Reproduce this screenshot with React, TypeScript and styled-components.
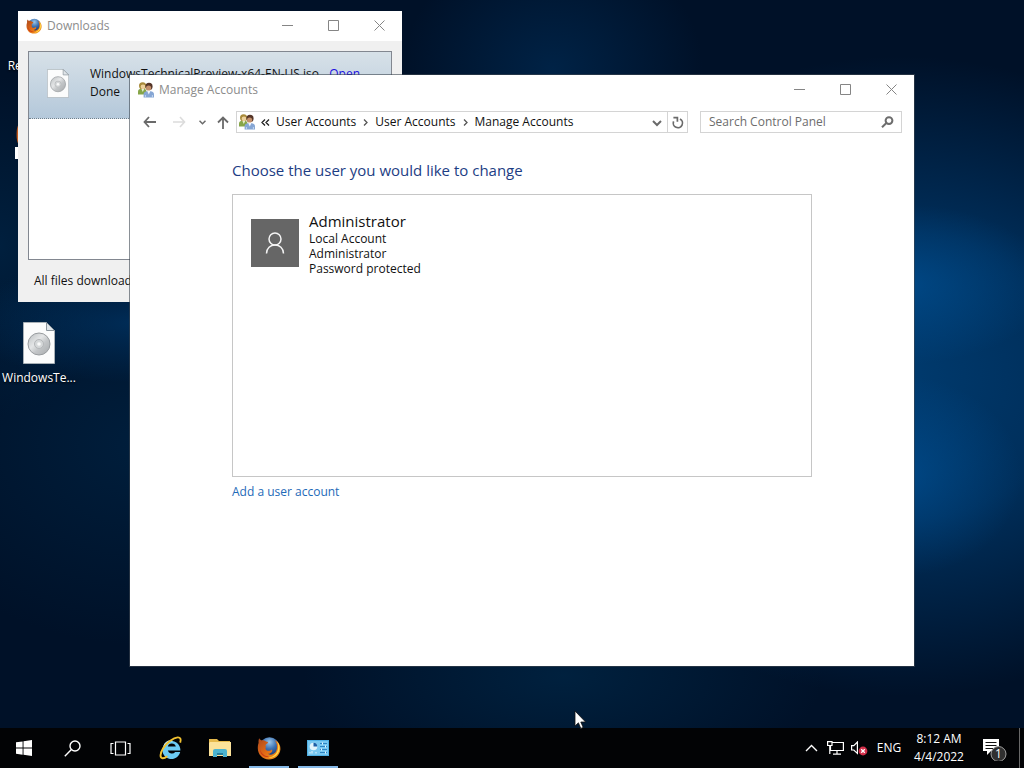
import { useState } from "react";
import styled, { createGlobalStyle } from "styled-components";

const GlobalStyle = createGlobalStyle`
	* {
		box-sizing: border-box;
	}
	body {
		margin: 0;
		font-family: "Open Sans", "Noto Sans", sans-serif;
		font-size: 12px;
		line-height: 16px;
		color: #111;
	}
	button, input {
		font: inherit;
		color: inherit;
		border: 0;
		padding: 0;
		margin: 0;
		background: none;
	}
	svg {
		flex-shrink: 0;
	}
`;

const Desktop = styled.div`
	display: flex;
	flex-direction: column;
	height: 100vh;
	overflow: hidden;
	background-color: #001128;
	background-image: radial-gradient(
			ellipse 120px 100px at 88% 62%,
			rgba(0, 96, 176, 0.45),
			transparent
		),
		radial-gradient(
			ellipse 150px 80px at 88% 37%,
			rgba(0, 92, 168, 0.5),
			transparent
		),
		radial-gradient(
			ellipse 380px 320px at 88% 49%,
			rgba(0, 76, 140, 0.7),
			rgba(0, 66, 124, 0.6) 45%,
			transparent
		),
		radial-gradient(
			ellipse 260px 120px at 55% 88%,
			rgba(0, 52, 90, 0.45),
			transparent
		),
		radial-gradient(
			ellipse 150px 130px at 54% 9%,
			rgba(0, 52, 100, 0.5),
			transparent
		),
		radial-gradient(
			ellipse 170px 60px at 13% 42%,
			rgba(0, 62, 118, 0.55),
			transparent
		),
		radial-gradient(
			ellipse 260px 200px at 14% 58%,
			rgba(0, 46, 84, 0.45),
			transparent
		),
		radial-gradient(
			ellipse 120px 170px at 0% 32%,
			rgba(0, 46, 84, 0.5),
			transparent
		);
`;

const Canvas = styled.main`
	position: relative;
	flex: 1;
`;

const IconGrid = styled.ul`
	display: grid;
	grid-auto-rows: 104px;
	width: 78px;
	margin: 0;
	padding: 7px 0 0;
	list-style: none;
`;

const DesktopItem = styled.li<{ $row: number }>`
	grid-row: ${(props) => props.$row};
	display: flex;
	flex-direction: column;
	align-items: center;
	gap: 3px;
	color: white;
	white-space: nowrap;
	text-shadow: 0 1px 2px black;
`;

const ShortcutIcon = styled.div`
	position: relative;
	display: flex;
	align-items: center;
	height: 48px;
`;

const ShortcutArrow = styled.span`
	position: absolute;
	left: 0;
	bottom: 0;
	width: 12px;
	height: 12px;
	background: white;
`;

/* Windows float freely over the desktop */
const WindowFrame = styled.section`
	position: absolute;
	display: flex;
	flex-direction: column;
	background: white;
`;

const DownloadsWindow = styled(WindowFrame)`
	top: 11px;
	left: 18px;
	width: 384px;
	background: #f0f0f0;
`;

const AccountsWindow = styled(WindowFrame)`
	top: 75px;
	right: 110px;
	bottom: 62px;
	left: 130px;
	outline: 1px solid rgba(60, 70, 80, 0.6);
`;

const TitleBar = styled.header`
	display: flex;
	align-items: center;
	height: 30px;
	padding-left: 8px;
	gap: 5px;
	background: white;
	color: #8c8c8c;
`;

const Title = styled.h1`
	flex: 1;
	margin: 0;
	font-size: 12px;
	font-weight: 400;
`;

const Controls = styled.div`
	display: flex;
	align-self: flex-start;
`;

const ControlButton = styled.button`
	display: flex;
	align-items: center;
	justify-content: center;
	width: 46px;
	height: 29px;
	color: #858585;
`;

const DownloadList = styled.div`
	height: 209px;
	margin: 10px 10px 0;
	border: 1px solid #828790;
	background: white;
`;

const DownloadRow = styled.div`
	display: flex;
	align-items: center;
	height: 67px;
	padding: 0 31px 4px 18px;
	gap: 21px;
	border-bottom: 1px dotted #6c7f90;
	background: linear-gradient(#d7e1e8, #b4c8da);
`;

const DownloadInfo = styled.div`
	flex: 1;
	min-width: 0;
	line-height: 18px;
	white-space: nowrap;
`;

const OpenLink = styled.a`
	align-self: flex-start;
	padding-top: 13px;
	line-height: 18px;
	color: #1a0fe0;
`;

const DownloadStatus = styled.p`
	margin: 0;
	padding: 13px 16px;
`;

const Toolbar = styled.nav`
	display: flex;
	align-items: center;
	padding: 6px 12px 0 4px;
`;

const NavButton = styled.button<{ $width: number; $dim?: boolean }>`
	display: flex;
	align-items: center;
	justify-content: center;
	width: ${(props) => props.$width}px;
	height: 22px;
	color: ${(props) => (props.$dim ? "#dcdcdc" : "#6a6a6a")};
`;

const AddressBar = styled.div`
	display: flex;
	flex: 1;
	height: 22px;
	padding-left: 2px;
	border: 1px solid #d4d4d4;
`;

const Crumbs = styled.ol`
	display: flex;
	flex: 1;
	align-items: center;
	margin: 0;
	padding: 0;
	list-style: none;
	white-space: nowrap;
`;

const Crumb = styled.li`
	display: flex;
	align-items: center;
`;

const CrumbMark = styled.span<{ $first?: boolean }>`
	display: flex;
	justify-content: center;
	width: ${(props) => (props.$first ? 21 : 19)}px;
	color: #555;
`;

const RefreshButton = styled(NavButton)`
	height: 20px;
	border-left: 1px solid #d4d4d4;
`;

const SearchBox = styled.label`
	display: flex;
	align-items: center;
	width: 202px;
	height: 22px;
	margin-left: 12px;
	padding: 0 7px 0 8px;
	border: 1px solid #d4d4d4;
	color: #6d6d6d;
`;

const SearchInput = styled.input`
	flex: 1;
	min-width: 0;
	outline: none;
	&::placeholder {
		color: #6d6d6d;
		opacity: 1;
	}
`;

const Content = styled.div`
	flex: 1;
	padding: 26px 102px 0;
`;

const Heading = styled.h2`
	margin: 0 0 13px;
	font-size: 15px;
	font-weight: 400;
	line-height: 22px;
	color: #1d3d84;
`;

const UserList = styled.div`
	height: 283px;
	padding: 16px 18px;
	border: 1px solid #c6c6c6;
`;

const UserTile = styled.button`
	display: flex;
	gap: 10px;
	text-align: left;
`;

const Avatar = styled.span`
	display: flex;
	align-items: center;
	justify-content: center;
	width: 48px;
	height: 48px;
	margin-top: 8px;
	background: #666;
`;

const UserText = styled.span`
	display: flex;
	flex-direction: column;
	line-height: 15px;
`;

const UserName = styled.span`
	font-size: 15px;
	line-height: 20px;
`;

const AddLink = styled.a`
	display: inline-block;
	margin-top: 7px;
	color: #1e6ab8;
	text-decoration: none;
`;

const Taskbar = styled.footer`
	display: flex;
	height: 40px;
	background: #020305;
	color: white;
`;

const TaskButton = styled.button`
	display: flex;
	align-items: center;
	justify-content: center;
	width: 48px;
	height: 40px;
`;

const PinnedApps = styled.div`
	display: flex;
	gap: 1px;
	margin-left: 3px;
`;

const AppButton = styled(TaskButton)<{ $running?: boolean }>`
	background: linear-gradient(#86b9e8, #86b9e8) no-repeat center bottom /
		${(props) => (props.$running ? "40px 2px" : "0 0")};
`;

const Tray = styled.div`
	display: flex;
	align-items: center;
	margin-left: auto;
`;

const TrayButton = styled.button<{ $width: number }>`
	display: flex;
	align-items: center;
	justify-content: center;
	width: ${(props) => props.$width}px;
	height: 40px;
`;

const Clock = styled(TrayButton)`
	flex-direction: column;
	line-height: 18px;
`;

const ShowDesktop = styled.button`
	width: 5px;
	height: 40px;
	border-left: 1px solid #686868;
`;

const Pointer = styled.svg`
	position: absolute;
	top: 710px;
	left: 574px;
`;

const FirefoxIcon = ({ size }: { size: number }) => (
	<svg width={size} height={size} viewBox="0 0 24 24" aria-hidden="true">
		<defs>
			<radialGradient id="globe" cx="50%" cy="25%" r="75%">
				<stop offset="0" stopColor="#9cc7e8" />
				<stop offset="0.45" stopColor="#3f74b4" />
				<stop offset="1" stopColor="#142a66" />
			</radialGradient>
			<linearGradient id="fox" x1="0" y1="0" x2="1" y2="1">
				<stop offset="0" stopColor="#a8471c" />
				<stop offset="0.5" stopColor="#e26a16" />
				<stop offset="1" stopColor="#f6a01c" />
			</linearGradient>
		</defs>
		<circle cx="12.5" cy="11" r="9.8" fill="url(#globe)" />
		<path
			d="M2.2 2.2 C3 3.6 4 4.1 5 4.3 C6.6 4 8 4.6 9 5.6 C10 5.8 10.8 6 11 6.6 C10.6 7.8 9.2 8.2 8.6 9 C8.2 9.8 8.8 10.6 9.4 11 C8 11.4 8 13.2 9.4 14.2 C11 15.2 13.4 15 14.8 13.6 C16.4 15.4 13.6 18.2 10.8 17.8 C15 20.4 20.4 17 20 10.6 C20.2 7.8 19 5.6 17.6 4.2 C21.8 5.6 23.8 9.6 23.4 13.4 C22.8 19.4 17.8 23.4 12 23.4 C5.4 23.4 .8 18.2 .8 12.2 C.8 9.6 1 8.4 1.6 7 C1.4 5.4 1.6 3.6 2.2 2.2Z"
			fill="url(#fox)"
		/>
		<path
			d="M19.4 4.8 C23 8 23.6 13.6 20.8 17.6 C18.4 21 14.6 22.4 11.4 21.8 C17.4 21 21.4 16.4 21.2 10.6 C21.2 8.4 20.4 6.4 19.4 4.8Z"
			fill="#ffdc4a"
		/>
		<path d="M3 13 C4.2 18 8 20.4 12 20.4 C7.4 22.4 3 18.4 3 13Z" fill="#c93a16" />
	</svg>
);

const IsoIcon = ({ width, height }: { width: number; height: number }) => (
	<svg width={width} height={height} viewBox="0 0 32 42" aria-hidden="true">
		<defs>
			<linearGradient id="disc" x1="0" y1="0" x2="1" y2="1">
				<stop offset="0" stopColor="#b9bdbf" />
				<stop offset="0.4" stopColor="#e4e6e7" />
				<stop offset="0.6" stopColor="#c3c6c8" />
				<stop offset="1" stopColor="#a6aaac" />
			</linearGradient>
		</defs>
		<path d="M.5 .5H23.5L31.5 8.5V41.5H.5Z" fill="#fbfcfc" stroke="#a8b0b6" />
		<path d="M23.5 .5V8.5H31.5Z" fill="#dfe5e9" stroke="#8b959c" />
		<circle cx="16" cy="22" r="11" fill="url(#disc)" stroke="#989c9f" />
		<circle cx="16" cy="22" r="4.5" fill="#d5d8d9" stroke="#b4b7b9" />
		<circle cx="16" cy="22" r="1.8" fill="#fafafa" />
	</svg>
);

const UsersIcon = () => (
	<svg width="16" height="16" viewBox="0 0 16 16" aria-hidden="true">
		<path d="M0 12.5V9.5C0 7.4 2 6.6 4.4 6.6S8.4 7.5 8.4 9.5V12.5Z" fill="#86a548" />
		<circle cx="4.6" cy="3.8" r="3.6" fill="#a88a3a" />
		<circle cx="5" cy="4.8" r="2.4" fill="#ecd09a" />
		<path d="M3.4 7L4.8 10L6.2 7Z" fill="#e6efcf" />
		<circle cx="11" cy="4.4" r="3.6" fill="#553528" />
		<circle cx="10.6" cy="6" r="2.6" fill="#c4906c" />
		<path d="M5.6 15.6V12.4C5.6 9.8 8 9 10.8 9S16 9.8 16 12.4V15.6Z" fill="#86a6d4" />
		<path d="M9.2 9L10.8 12.4L12.4 9Z" fill="#f2f6fc" />
		<path d="M7.4 15.6V13M14.4 15.6V13" stroke="#c3d6f0" />
	</svg>
);

const InternetExplorerIcon = () => (
	<svg width="24" height="24" viewBox="0 0 24 24" fill="none" aria-hidden="true">
		<path
			d="M21.4 14.4H8.8A4.3 4.3 0 0 0 16.2 16H21.2A9 9 0 1 1 21.4 14.4ZM8.8 10.6H16.8A4.1 4.1 0 0 0 8.8 10.6Z"
			fill="#6ccbf3"
			fillRule="evenodd"
		/>
		<path
			d="M4.8 10.4C6 6.8 9.4 4.7 13.4 5"
			stroke="#c4edfc"
			strokeWidth="1.2"
		/>
		<path
			d="M21.2 6.6C22.4 3.2 21.4 1.2 18.6 1.4C14.6 1.7 7.8 6.4 4 12.6C.8 17.8 .8 22 3.6 22.2C5 22.3 6.8 21.4 8.4 20.2"
			stroke="#f2c230"
			strokeWidth="1.9"
		/>
	</svg>
);

const FolderIcon = () => (
	<svg width="22" height="20" viewBox="0 0 22 20" aria-hidden="true">
		<path d="M0 1H8L10 3H21V17H0Z" fill="#e5b94c" />
		<path d="M1 4H22V18H0V5Z" fill="#fbe29a" />
		<path d="M4 19V13Q4 11 6 11H16Q18 11 18 13V19H14V15H8V19Z" fill="#4cb3cf" />
		<path d="M8 15H14V17H8Z" fill="#287f9c" />
	</svg>
);

const ControlPanelIcon = () => (
	<svg width="22" height="16" viewBox="0 0 22 16" aria-hidden="true">
		<rect width="22" height="16" fill="#4fb0e4" />
		<rect x="1" y="1" width="20" height="14" fill="#78c8f1" />
		<circle cx="6.5" cy="6.5" r="3.8" fill="#e2f4fc" />
		<path d="M6.5 6.5V2.7A3.8 3.8 0 0 1 10.3 6.5Z" fill="#1d5fa6" />
		<path d="M3 13.5V12M5 13.5V11M9 13.5V12" stroke="#e8f7ff" />
		<path d="M13 3.5H20M13 6.5H20M13 9.5H20M13 12.5H20" stroke="#2d83c2" />
		<path d="M15.5 2.5V4.5M18.5 5.5V7.5M14.5 8.5V10.5M18.5 11.5V13.5" stroke="#e8f7ff" />
	</svg>
);

const WindowControls = () => (
	<Controls>
		<ControlButton aria-label="Minimize">
			<svg width="12" height="11" stroke="currentColor">
				<path d="M1 5.5H12" />
			</svg>
		</ControlButton>
		<ControlButton aria-label="Maximize">
			<svg width="12" height="11" stroke="currentColor" fill="none">
				<path d="M1.5 .5H11.5V10.5H1.5Z" />
			</svg>
		</ControlButton>
		<ControlButton aria-label="Close">
			<svg width="12" height="11" stroke="currentColor">
				<path d="M1.5 .5L11.5 10.5M11.5 .5L1.5 10.5" />
			</svg>
		</ControlButton>
	</Controls>
);

const crumbs = ["User Accounts", "User Accounts", "Manage Accounts"];

function Downloads() {
	return (
		<DownloadsWindow aria-label="Downloads">
			<TitleBar>
				<FirefoxIcon size={16} />
				<Title>Downloads</Title>
				<WindowControls />
			</TitleBar>
			<DownloadList>
				<DownloadRow>
					<IsoIcon width={22} height={29} />
					<DownloadInfo>
						<div>WindowsTechnicalPreview-x64-EN-US.iso</div>
						<div>Done</div>
					</DownloadInfo>
					<OpenLink href="#open">Open</OpenLink>
				</DownloadRow>
			</DownloadList>
			<DownloadStatus>All files downloaded</DownloadStatus>
		</DownloadsWindow>
	);
}

function ManageAccounts() {
	const [query, setQuery] = useState("");

	return (
		<AccountsWindow aria-label="Manage Accounts">
			<TitleBar>
				<UsersIcon />
				<Title>Manage Accounts</Title>
				<WindowControls />
			</TitleBar>
			<Toolbar>
				<NavButton $width={30} aria-label="Back">
					<svg width="13" height="12" stroke="currentColor" strokeWidth="1.8" fill="none">
						<path d="M1 6H13M6 1L1.5 6L6 11" />
					</svg>
				</NavButton>
				<NavButton $width={30} $dim aria-label="Forward">
					<svg width="13" height="12" stroke="currentColor" strokeWidth="1.6" fill="none">
						<path d="M0 6H12M7 1L11.5 6L7 11" />
					</svg>
				</NavButton>
				<NavButton $width={16} aria-label="Recent locations">
					<svg width="7" height="5" stroke="currentColor" strokeWidth="1.5" fill="none">
						<path d="M.5 .8L3.5 3.8L6.5 .8" />
					</svg>
				</NavButton>
				<NavButton $width={26} aria-label="Up">
					<svg width="12" height="13" stroke="currentColor" strokeWidth="1.8" fill="none">
						<path d="M6 1.5V13M1 6.5L6 1.5L11 6.5" />
					</svg>
				</NavButton>
				<AddressBar>
					<Crumbs>
						<UsersIcon />
						{crumbs.map((crumb, i) => (
							<Crumb key={i}>
								<CrumbMark $first={i === 0}>
									{i === 0 ? (
										<svg width="9" height="7" stroke="#222" strokeWidth="1.3" fill="none">
											<path d="M4 .5L1 3.5L4 6.5M8 .5L5 3.5L8 6.5" />
										</svg>
									) : (
										<svg width="5" height="7" stroke="currentColor" strokeWidth="1.3" fill="none">
											<path d="M1 .5L4 3.5L1 6.5" />
										</svg>
									)}
								</CrumbMark>
								<button>{crumb}</button>
							</Crumb>
						))}
					</Crumbs>
					<NavButton $width={20} aria-label="Previous locations">
						<svg width="10" height="7" stroke="currentColor" strokeWidth="2" fill="none">
							<path d="M1 1L5 5L9 1" />
						</svg>
					</NavButton>
					<RefreshButton $width={20} aria-label="Refresh">
						<svg width="12" height="13" stroke="currentColor" strokeWidth="1.7" fill="none">
							<path d="M1.6 5.4A4.6 4.6 0 1 0 8 3M1.4 1.6H5.4V5.8" />
						</svg>
					</RefreshButton>
				</AddressBar>
				<SearchBox>
					<SearchInput
						aria-label="Search Control Panel"
						placeholder="Search Control Panel"
						value={query}
						onChange={(e) => setQuery(e.target.value)}
					/>
					<svg width="13" height="12" stroke="currentColor" strokeWidth="2" fill="none">
						<circle cx="8" cy="4.6" r="3.4" />
						<path d="M5.4 7L1 11.2" />
					</svg>
				</SearchBox>
			</Toolbar>
			<Content>
				<Heading>Choose the user you would like to change</Heading>
				<UserList>
					<UserTile>
						<Avatar>
							<svg width="20" height="24" stroke="#f4f4f4" strokeWidth="1.5" fill="none">
								<circle cx="10" cy="8" r="6" />
								<path d="M1.5 22.5C1.5 17 5.5 14 10 14S18.5 17 18.5 22.5" />
							</svg>
						</Avatar>
						<UserText>
							<UserName>Administrator</UserName>
							<span>Local Account</span>
							<span>Administrator</span>
							<span>Password protected</span>
						</UserText>
					</UserTile>
				</UserList>
				<AddLink href="#add">Add a user account</AddLink>
			</Content>
		</AccountsWindow>
	);
}

function SystemTray() {
	return (
		<Tray>
			<TrayButton $width={24} aria-label="Show hidden icons">
				<svg width="13" height="8" stroke="white" strokeWidth="1.4" fill="none">
					<path d="M1 7L6.5 1.5L12 7" />
				</svg>
			</TrayButton>
			<TrayButton $width={24} aria-label="Network">
				<svg width="17" height="14" stroke="white" strokeWidth="1.2" fill="none">
					<path d="M5 1.5H16.4V9.5H3.5V5M10 9.5V13M6 13.2H14" />
					<path d="M.6 .6H5V4.5H.6ZM2.8 4.5V13" />
				</svg>
			</TrayButton>
			<TrayButton $width={24} aria-label="Volume">
				<svg width="17" height="15" fill="none">
					<path d="M.6 4.6H2.8L6.4 1V12.4L2.8 9H.6Z" stroke="white" strokeWidth="1.2" />
					<circle cx="12" cy="10" r="4.4" fill="#d32f4a" />
					<path d="M10.2 8.2L13.8 11.8M13.8 8.2L10.2 11.8" stroke="white" strokeWidth="1.3" />
				</svg>
			</TrayButton>
			<TrayButton $width={36}>ENG</TrayButton>
			<Clock $width={64}>
				<span>8:12 AM</span>
				<span>4/4/2022</span>
			</Clock>
			<TrayButton $width={48} aria-label="Notifications">
				<svg width="26" height="26" viewBox="0 0 26 26">
					<path d="M1 4H17V16H9L5 20V16H1Z" fill="white" />
					<path d="M3.5 7.5H14.5M3.5 10.5H14.5M3.5 13.5H11" stroke="#111" />
					<circle cx="16.5" cy="19" r="7.5" fill="#303030" stroke="#a0a0a0" />
					<text x="16.5" y="23" fontSize="12" textAnchor="middle" fill="white">
						1
					</text>
				</svg>
			</TrayButton>
			<ShowDesktop aria-label="Show desktop" />
		</Tray>
	);
}

function App() {
	return (
		<Desktop>
			<GlobalStyle />
			<Canvas>
				<IconGrid>
					<DesktopItem $row={1}>
						<svg width="48" height="48" aria-hidden="true">
							<path d="M10 8H38L34 44H14Z" fill="#dfe8ee" />
						</svg>
						Recycle Bin
					</DesktopItem>
					<DesktopItem $row={2}>
						<ShortcutIcon>
							<FirefoxIcon size={48} />
							<ShortcutArrow />
						</ShortcutIcon>
						Firefox
					</DesktopItem>
					<DesktopItem $row={4}>
						<ShortcutIcon>
							<IsoIcon width={32} height={42} />
						</ShortcutIcon>
						WindowsTe...
					</DesktopItem>
				</IconGrid>
				<Downloads />
				<ManageAccounts />
				<Pointer width="13" height="20" viewBox="0 0 13 20" aria-hidden="true">
					<path
						d="M1 1V16L4.4 12.8L6.8 18.4L9.2 17.4L6.8 12H11.6Z"
						fill="white"
						stroke="#111"
						strokeWidth="0.8"
					/>
				</Pointer>
			</Canvas>
			<Taskbar>
				<TaskButton aria-label="Start">
					<svg width="16" height="16" fill="white">
						<path d="M0 2.3L6.6 1.4V7.6H0ZM7.5 1.2L16 0V7.6H7.5ZM0 8.5H6.6V14.7L0 13.8ZM7.5 8.5H16V16L7.5 14.8Z" />
					</svg>
				</TaskButton>
				<TaskButton aria-label="Search">
					<svg width="17" height="17" stroke="white" strokeWidth="1.4" fill="none">
						<circle cx="11" cy="6" r="5" />
						<path d="M7.4 9.6L.8 16.2" />
					</svg>
				</TaskButton>
				<TaskButton aria-label="Task View">
					<svg width="21" height="15" stroke="white" strokeWidth="1.2" fill="none">
						<path d="M5.5 1H15.5V14H5.5ZM3.5 2.5H1V12.5H3.5M17.5 2.5H20V12.5H17.5" />
					</svg>
				</TaskButton>
				<PinnedApps>
					<AppButton aria-label="Internet Explorer">
						<InternetExplorerIcon />
					</AppButton>
					<AppButton aria-label="File Explorer">
						<FolderIcon />
					</AppButton>
					<AppButton $running aria-label="Firefox">
						<FirefoxIcon size={24} />
					</AppButton>
					<AppButton $running aria-label="Control Panel">
						<ControlPanelIcon />
					</AppButton>
				</PinnedApps>
				<SystemTray />
			</Taskbar>
		</Desktop>
	);
}

export default App;
